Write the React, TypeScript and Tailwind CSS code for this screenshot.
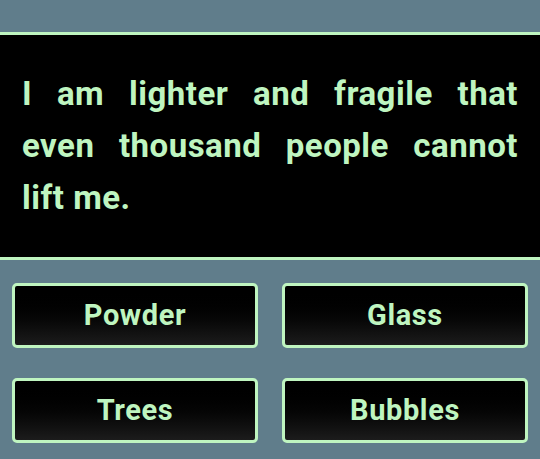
import React from 'react';

const options = ['Powder', 'Glass', 'Trees', 'Bubbles'];

export default function App() {
  return (
    <div className="min-h-[459px] w-[540px] bg-[#607d8b] pt-8 font-['Roboto',sans-serif]">
      {/* question */}
      <div className="border-y-[3px] border-[#bff5c0] bg-black px-[22px] py-[33px]">
        <p className="text-justify text-[33px] font-bold leading-[52px] tracking-[0.5px] text-[#bff5c0]">
          I am lighter and fragile that even thousand people cannot lift me.
        </p>
      </div>

      {/* answers */}
      <div className="grid grid-cols-2 gap-x-6 gap-y-[30px] px-3 pt-[23px]">
        {options.map((label) => (
          <button
            key={label}
            className="flex h-[65px] items-center justify-center rounded-[5px] border-[3px] border-[#bff5c0] bg-gradient-to-b from-black to-[#1c1c1c] text-[29px] font-bold tracking-[0.6px] text-[#bff5c0]"
          >
            {label}
          </button>
        ))}
      </div>
    </div>
  );
}
